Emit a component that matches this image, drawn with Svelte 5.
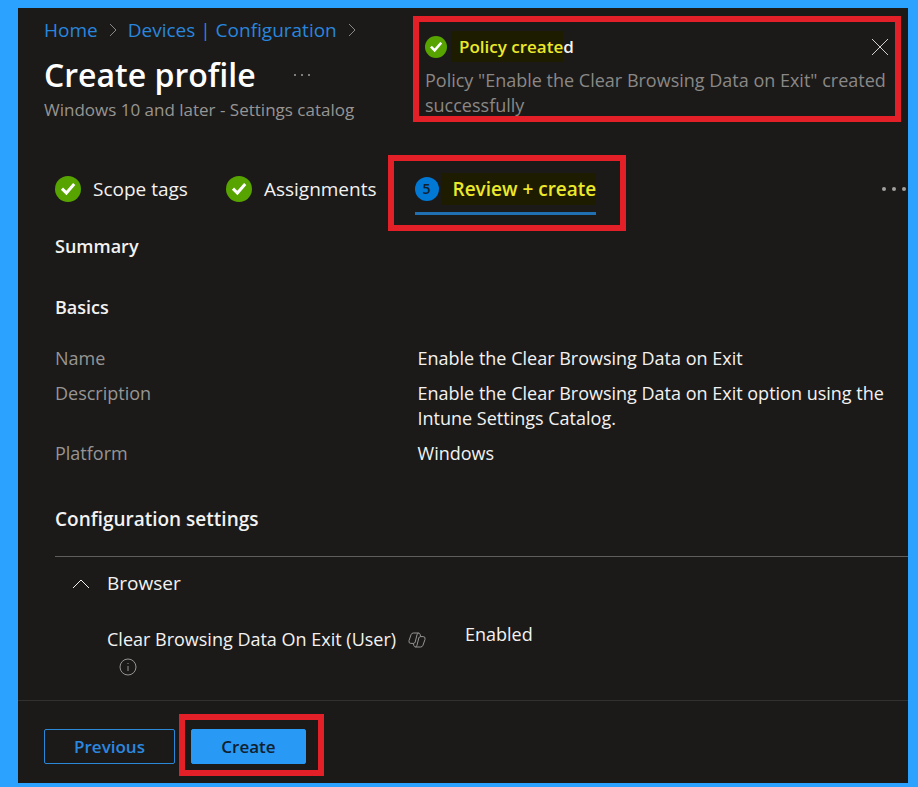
<script lang="ts">
	const crumbs = ['Home', 'Devices | Configuration'];

	const doneSteps = ['Scope tags', 'Assignments'];

	const basics = [
		{ label: 'Name', value: 'Enable the Clear Browsing Data on Exit' },
		{
			label: 'Description',
			value:
				'Enable the Clear Browsing Data on Exit option using the Intune Settings Catalog.'
		},
		{ label: 'Platform', value: 'Windows' }
	];

	let open = $state(true);
	let toast = $state(true);
</script>

{#snippet check()}
	<svg class="check" viewBox="0 0 26 26" aria-hidden="true">
		<circle cx="13" cy="13" r="13" fill="#57a300" />
		<path d="M7 12.6l4.4 4.4 7.8-9" fill="none" stroke="#fff" stroke-width="3" />
	</svg>
{/snippet}

<main class="panel">
	<header>
		<nav class="crumbs" aria-label="Breadcrumb">
			{#each crumbs as crumb (crumb)}
				<a href="#top">{crumb}</a>
				<svg class="sep" viewBox="0 0 8 14" aria-hidden="true">
					<path d="M1 1l6 6-6 6" />
				</svg>
			{/each}
		</nav>
		<div class="title">
			<h1>Create profile</h1>
			<button class="dots" aria-label="More">
				<svg viewBox="0 0 16 4" width="16" height="4">
					<circle cx="1" cy="2" r="1" /><circle cx="8" cy="2" r="1" /><circle cx="15" cy="2" r="1" />
				</svg>
			</button>
		</div>
		<p class="subtitle">Windows 10 and later - Settings catalog</p>
	</header>

	{#if toast}
		<aside class="toast" role="status">
			<div class="toast-head">
				{@render check()}
				<strong><mark>Policy create</mark>d</strong>
				<button class="close" aria-label="Close" onclick={() => (toast = false)}>
					<svg viewBox="0 0 18 18" width="18" height="18">
						<path d="M1 1l16 16M17 1L1 17" />
					</svg>
				</button>
			</div>
			<p>Policy "Enable the Clear Browsing Data on Exit" created successfully</p>
		</aside>
	{/if}

	<div class="steps">
		{#each doneSteps as step (step)}
			<button class="step">{@render check()}{step}</button>
		{/each}
		<button class="step current">
			<span class="num">5</span>
			<mark>Review + create</mark>
		</button>
		<button class="dots overflow" aria-label="More steps">
			<svg viewBox="0 0 24 4" width="24" height="4">
				<circle cx="2" cy="2" r="2" /><circle cx="12" cy="2" r="2" /><circle cx="22" cy="2" r="2" />
			</svg>
		</button>
	</div>

	<section class="body">
		<h2>Summary</h2>
		<h2>Basics</h2>
		<dl>
			{#each basics as row (row.label)}
				<dt>{row.label}</dt>
				<dd>{row.value}</dd>
			{/each}
		</dl>

		<h2 class="settings-title">Configuration settings</h2>
		<div class="settings">
			<button class="group" aria-expanded={open} onclick={() => (open = !open)}>
				<svg class:closed={!open} viewBox="0 0 18 12" width="18" height="12" aria-hidden="true">
					<path d="M1 10l8-8 8 8" />
				</svg>
				Browser
			</button>
			{#if open}
				<div class="setting">
					<div class="name">
						<span>Clear Browsing Data On Exit (User)</span>
						<svg class="copilot" viewBox="0 0 18 16" width="18" height="16" aria-hidden="true">
							<path
								d="M12.6 4.6L12.2 2.6Q11.8 1 10.2 1H5.4Q3.6 1 3 2.8L1 8.6Q.4 11.4 2.8 11.4H5.4Q6.8 11.4 7.2 10L9 2.8Q9.4 1 10.6 1"
							/>
							<path
								d="M5.4 11.4L5.8 13.4Q6.2 15 7.8 15H12.6Q14.4 15 15 13.2L17 7.4Q17.6 4.6 15.2 4.6H12.6Q11.2 4.6 10.8 6L9 13.2Q8.6 15 7.4 15"
							/>
						</svg>
						<svg class="info" viewBox="0 0 18 18" width="18" height="18" aria-hidden="true">
							<circle cx="9" cy="9" r="8" />
							<path d="M9 8v5M9 5v1" />
						</svg>
					</div>
					<div class="value">Enabled</div>
				</div>
			{/if}
		</div>
	</section>

	<footer>
		<button class="btn">Previous</button>
		<button class="btn primary">Create</button>
	</footer>
</main>

<style>
	:global(body) {
		background: #2ba2ff;
	}
	.panel {
		position: relative;
		margin: 8px 10px 3px 18px;
		background: #1b1a19;
		color: #f3f2f1;
		font-family: 'Segoe UI', 'Open Sans', 'Noto Sans', sans-serif;
		font-size: 18px;
		line-height: 25px;
		overflow: hidden;
	}
	h1,
	h2,
	p,
	dl,
	dd {
		margin: 0;
	}
	button {
		padding: 0;
		border: 0;
		background: none;
		color: inherit;
		font: inherit;
		cursor: pointer;
	}
	svg {
		flex: none;
		fill: none;
		stroke: currentColor;
	}
	mark {
		background: #1d1b00;
		color: #ece92a;
	}
	.check {
		width: 26px;
		height: 26px;
		stroke: none;
	}
	header {
		padding: 8px 26px 0;
	}
	.crumbs {
		display: flex;
		align-items: center;
		gap: 11px;
		font-size: 19px;
		line-height: 28px;
	}
	.crumbs a {
		color: #2886de;
		text-decoration: none;
	}
	.crumbs a:hover {
		text-decoration: underline;
	}
	.sep {
		width: 8px;
		height: 14px;
		color: #8a8886;
	}
	.title {
		display: flex;
		align-items: center;
		gap: 38px;
		margin-top: 9px;
	}
	h1 {
		color: #fff;
		font-size: 32px;
		font-weight: 600;
		line-height: 44px;
	}
	.dots {
		display: flex;
		color: #a19f9d;
	}
	.dots svg {
		fill: currentColor;
		stroke: none;
	}
	.subtitle {
		color: #979593;
		font-size: 17px;
	}
	.toast {
		position: absolute;
		top: 8px;
		right: 7px;
		box-sizing: border-box;
		width: 488px;
		height: 106px;
		padding: 12px 6px 0;
		border: 6px solid #e32027;
		background: #1b1a19;
		overflow: hidden;
	}
	.toast-head {
		display: flex;
		align-items: center;
		margin-bottom: 9px;
	}
	.toast-head .check {
		width: 22px;
		height: 22px;
	}
	.toast strong {
		margin-left: 4px;
		font-size: 17px;
		font-weight: 600;
	}
	.toast mark {
		padding: 4px 0 4px 8px;
	}
	.close {
		display: flex;
		margin-left: auto;
		color: #d2d0ce;
	}
	.toast p {
		color: #8a8886;
	}
	.steps {
		display: flex;
		align-items: flex-start;
		gap: 38px;
		padding: 53px 0 0 37px;
		font-size: 19px;
		line-height: 28px;
	}
	.step {
		display: flex;
		align-items: center;
		gap: 12px;
		height: 40px;
		padding-bottom: 12px;
		white-space: nowrap;
	}
	.step.current {
		position: relative;
		gap: 2px;
		padding-bottom: 9px;
		border-bottom: 3px solid #1f6fb2;
		font-weight: 600;
	}
	.step.current::after {
		content: '';
		position: absolute;
		inset: -20px -30px -19px -27px;
		border: 6px solid #e32027;
	}
	.step mark {
		padding: 2px 0 2px 12px;
	}
	.num {
		width: 24px;
		height: 24px;
		border-radius: 50%;
		background: #0078d4;
		color: #10202e;
		font-size: 14px;
		line-height: 24px;
	}
	.overflow {
		margin: 12px 2px 0 auto;
	}
	.body {
		padding-left: 37px;
	}
	h2 {
		margin-top: 36px;
		font-size: 18px;
		font-weight: 600;
		line-height: 25px;
	}
	.steps + .body h2:first-child {
		margin-top: 19px;
	}
	dl {
		display: grid;
		grid-template-columns: 17fr 23fr;
		row-gap: 10px;
		margin-top: 26px;
	}
	dt {
		color: #979593;
	}
	h2.settings-title {
		margin-top: 41px;
		font-size: 19px;
	}
	.settings {
		margin-top: 24px;
		padding: 14px 0 24px 17px;
		border-top: 1px solid #605e5c;
	}
	.group {
		display: flex;
		align-items: center;
		gap: 17px;
		font-size: 19px;
	}
	.group .closed {
		transform: rotate(180deg);
	}
	.setting {
		display: grid;
		grid-template-columns: 358px 1fr;
		margin: 26px 0 0 35px;
	}
	.name {
		display: flex;
		flex-wrap: wrap;
		align-items: center;
		gap: 2px 12px;
		padding-top: 5px;
	}
	.copilot,
	.info {
		color: #979593;
	}
	.info {
		margin: 4px 200px 0 12px;
	}
	footer {
		display: flex;
		gap: 16px;
		padding: 28px 26px 19px;
		border-top: 1px solid #323130;
	}
	.btn {
		box-sizing: border-box;
		width: 131px;
		height: 35px;
		border: 1px solid #2b88d8;
		border-radius: 2px;
		color: #2b88e0;
		font-size: 17px;
		font-weight: 600;
	}
	.btn.primary {
		position: relative;
		width: 115px;
		border-color: #2899f5;
		background: #2899f5;
		color: #10202e;
	}
	.btn.primary::after {
		content: '';
		position: absolute;
		inset: -16px -19px -13px -13px;
		border: 6px solid #e32027;
	}
</style>
